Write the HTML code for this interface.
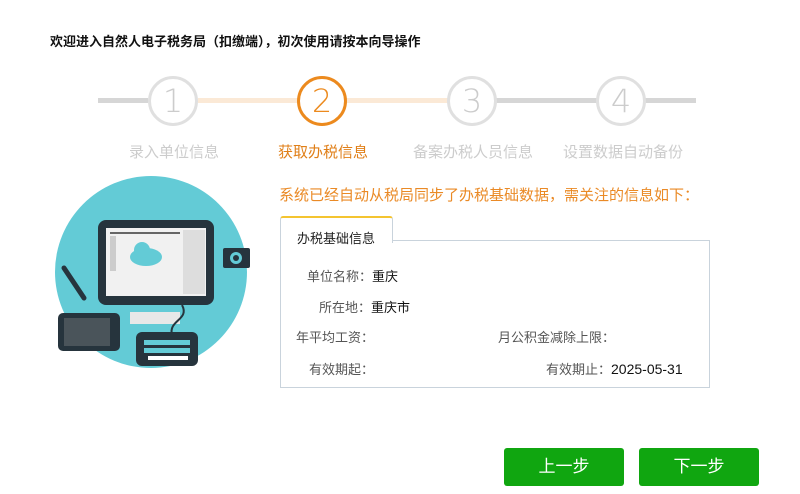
<!DOCTYPE html>
<html><head><meta charset="utf-8"><style>
body{margin:0;width:800px;height:494px;background:#fff;font-family:"Liberation Sans","Noto Sans CJK SC",sans-serif;position:relative;overflow:hidden}
.a{position:absolute;white-space:nowrap}
.c{position:absolute;width:44px;height:44px;border:3px solid #e0e0e0;border-radius:50%;background:#fff;color:#ccc;font-size:32px;line-height:44px;text-align:center;font-family:"DejaVu Sans",sans-serif;font-weight:200}
.l{position:absolute;color:#ccc;font-size:15px;top:141px}
.k{color:#555;font-size:13px}
.btn{position:absolute;top:448px;width:120px;height:38px;background:#10a610;border-radius:3px;color:#fff;font-size:17px;line-height:38px;text-align:center}
</style></head><body>
<div class="a" style="left:50px;top:31px;font-size:13px;font-weight:bold;color:#111">欢迎进入自然人电子税务局（扣缴端），初次使用请按本向导操作</div>
<div class="a" style="left:98px;top:98px;width:50px;height:5px;background:#d6d6d6"></div>
<div class="a" style="left:198px;top:98px;width:250px;height:5px;background:#fbe9d6"></div>
<div class="a" style="left:496px;top:98px;width:200px;height:5px;background:#d6d6d6"></div>
<div class="c" style="left:148px;top:76px">1</div>
<div class="c" style="left:297px;top:76px;border-color:#ec8a1e;color:#ec8a1e">2</div>
<div class="c" style="left:447px;top:76px">3</div>
<div class="c" style="left:596px;top:76px">4</div>
<div class="l" style="left:129px">录入单位信息</div>
<div class="l" style="left:278px;color:#e07f18">获取办税信息</div>
<div class="l" style="left:413px">备案办税人员信息</div>
<div class="l" style="left:563px">设置数据自动备份</div>
<svg class="a" style="left:50px;top:170px" width="220" height="210" viewBox="0 0 220 210">
<circle cx="101" cy="102" r="96" fill="#63cbd6"/>
<rect x="48" y="50" width="116" height="85" rx="8" fill="#26343d"/>
<rect x="56" y="58" width="100" height="68" fill="#f1f1f1"/>
<rect x="60" y="62" width="70" height="2" fill="#666"/>
<rect x="133" y="60" width="22" height="64" fill="#ddd"/>
<rect x="60" y="66" width="6" height="35" fill="#ccc"/>
<ellipse cx="96" cy="87" rx="16" ry="9" fill="#63cbd6"/>
<circle cx="92" cy="80" r="8" fill="#63cbd6"/>
<rect x="80" y="142" width="50" height="12" fill="#e8e8e8"/>
<path d="M132 135 C140 150 118 150 122 165" stroke="#26343d" stroke-width="2" fill="none"/>
<rect x="86" y="162" width="62" height="34" rx="6" fill="#26343d"/>
<rect x="94" y="170" width="46" height="5" fill="#63cbd6"/>
<rect x="94" y="178" width="46" height="5" fill="#63cbd6"/>
<rect x="98" y="186" width="40" height="4" fill="#fff"/>
<rect x="8" y="143" width="62" height="38" rx="5" fill="#26343d"/>
<rect x="14" y="148" width="46" height="28" fill="#4a545a"/>
<path d="M14 98 L34 128" stroke="#26343d" stroke-width="5" stroke-linecap="round"/>
<rect x="173" y="78" width="27" height="20" rx="2" fill="#26343d"/>
<circle cx="186" cy="88" r="6" fill="#63cbd6"/><circle cx="186" cy="88" r="3" fill="#26343d"/>
</svg>
<div class="a" style="left:279px;top:184px;font-size:15px;color:#ea8a26">系统已经自动从税局同步了办税基础数据，需关注的信息如下：</div>
<div class="a" style="left:280px;top:240px;width:428px;height:146px;border:1px solid #c9d3dc"></div>
<div class="a" style="left:280px;top:216px;width:111px;height:25px;border:1px solid #c9d3dc;border-top:2px solid #f4c430;border-bottom:none;background:#fff;border-radius:3px 3px 0 0"></div>
<div class="a" style="left:297px;top:228px;font-size:13px;color:#222">办税基础信息</div>
<div class="a k" style="left:307px;top:266px">单位名称：<span style="color:#111">重庆</span></div>
<div class="a k" style="left:319px;top:297px">所在地：<span style="color:#111">重庆市</span></div>
<div class="a k" style="left:296px;top:327px">年平均工资：</div>
<div class="a k" style="left:498px;top:327px">月公积金减除上限：</div>
<div class="a k" style="left:309px;top:359px">有效期起：</div>
<div class="a k" style="left:546px;top:359px">有效期止：<span style="color:#111;font-size:14px">2025-05-31</span></div>
<div class="btn" style="left:504px">上一步</div>
<div class="btn" style="left:639px">下一步</div>
</body></html>
